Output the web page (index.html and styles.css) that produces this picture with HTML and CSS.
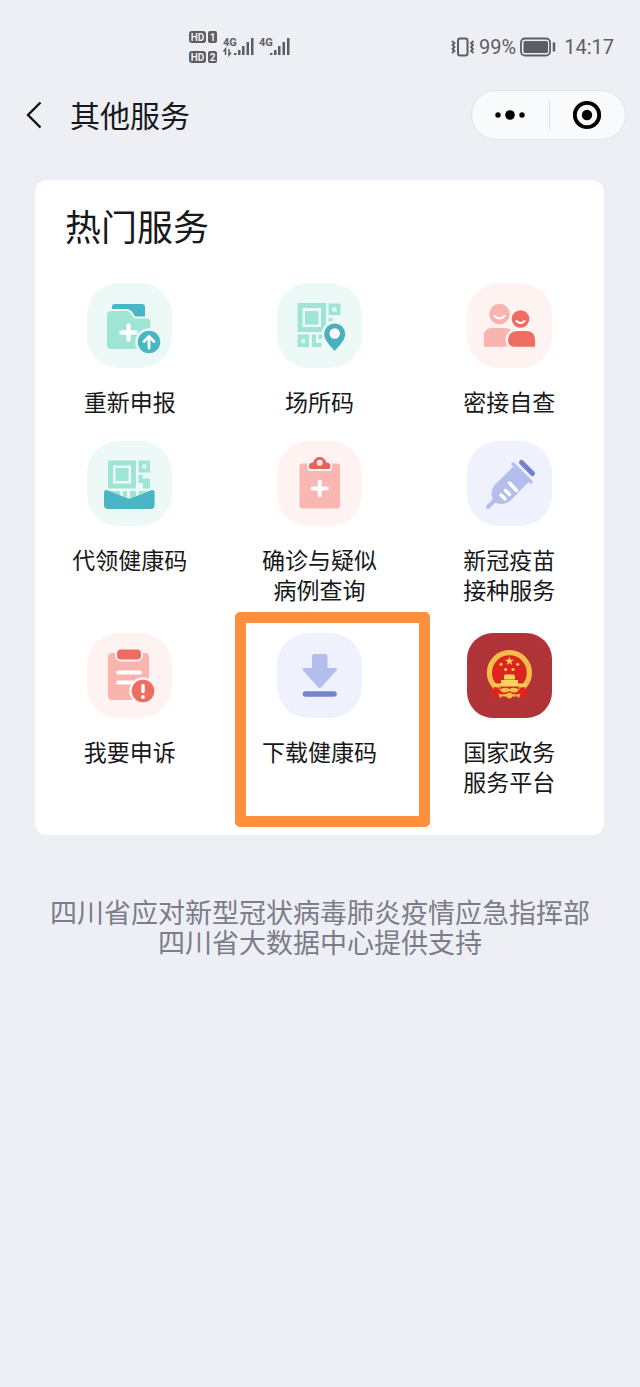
FILE: index.html
```html
<!DOCTYPE html>
<html lang="zh-CN">
  <head>
    <meta charset="UTF-8" />
    <meta name="viewport" content="width=device-width, initial-scale=1.0" />
    <title>其他服务</title>
    <link rel="stylesheet" href="styles.css">
  </head>
  <body>
    <div class="status-bar">
      <svg class="signal" width="104" height="38" viewBox="0 0 104 38">
        <rect x="1" y="3" width="17" height="12" rx="3" />
        <rect x="20" y="3" width="9" height="12" rx="2" />
        <rect x="1" y="23" width="17" height="12" rx="3" />
        <rect x="20" y="23" width="9" height="12" rx="2" />
        <g class="badge-text">
          <text x="9.500" y="12.500">HD</text>
          <text x="24.500" y="12.500">1</text>
          <text x="9.500" y="32.500">HD</text>
          <text x="24.500" y="32.500">2</text>
        </g>
        <text class="net" x="35" y="18">4G</text>
        <text class="net" x="71" y="18">4G</text>
        <path d="M37.500 27v-6l-2 2.500M41 21v6l2-2.500" fill="none" stroke="#5c5e63" stroke-width="1.500" />
        <path d="M46 25h2.500v2H46zM50 22h2.500v5H50zM54 18h2.500v9H54zM58.500 14H61v13h-2.500zM63 10h2.500v17H63z" />
        <path d="M82 25h2.500v2H82zM86 22h2.500v5H86zM90 18h2.500v9H90zM94.500 14H97v13h-2.500zM99 10h2.500v17H99z" />
      </svg>
      <div class="status-right">
        <svg width="24" height="20" viewBox="0 0 24 20" fill="none" stroke="#5c5e63">
          <rect x="7" y="1.500" width="9.500" height="17" rx="2" stroke-width="2" />
          <path d="M1 4l2.500 2-2 2 2 2-2 2 2 2-2.500 2M22.500 4L20 6l2 2-2 2 2 2-2 2 2.500 2" stroke-width="1.800" />
        </svg>
        <span class="percent">99%</span>
        <svg width="36" height="20" viewBox="0 0 36 20">
          <rect x="1" y="1.500" width="29" height="17" rx="4" fill="none" stroke="#5c5e63" stroke-width="1.800" />
          <rect x="3.500" y="4" width="24.500" height="12" rx="1.500" fill="#5c5e63" />
          <path d="M34 5.500v9" stroke="#5c5e63" stroke-width="2.500" />
        </svg>
        <span class="time">14:17</span>
      </div>
    </div>

    <header class="nav">
      <button class="back-btn" aria-label="返回">
        <svg width="16" height="28" viewBox="0 0 16 28" fill="none" stroke="#111" stroke-width="2.400">
          <path d="M14.500 1.500L2 14l12.500 12.500" />
        </svg>
      </button>
      <h1>其他服务</h1>
      <div class="capsule">
        <button aria-label="更多">
          <svg width="32" height="12" viewBox="0 0 32 12">
            <circle cx="4" cy="6" r="2.700" />
            <circle cx="16" cy="6" r="4.800" />
            <circle cx="28" cy="6" r="2.700" />
          </svg>
        </button>
        <button aria-label="关闭">
          <svg width="30" height="30" viewBox="0 0 30 30">
            <circle cx="15" cy="15" r="12.200" fill="none" stroke="#000" stroke-width="3.800" />
            <circle cx="15" cy="15" r="5.200" />
          </svg>
        </button>
      </div>
    </header>

    <main>
      <section class="card">
        <h2>热门服务</h2>
        <div class="services">
          <a class="service" href="#">
            <svg class="tile green" viewBox="0 0 85 85">
              <path d="M25 35V24q0-3 3-3h27q3 0 3 3v11z" fill="#4ab5c4" />
              <path d="M20 32q0-4 4-4h16q2 0 3.500 2l2.500 4q1 1.500 3 1.500h10.500q4 0 4 4V62q0 4-4 4H24q-4 0-4-4z" fill="#9ee5d6" stroke="#edf9f7" stroke-width="4" paint-order="stroke" />
              <path d="M41.500 42.500v14M34.500 49.500h14" stroke="#fff" stroke-width="4.500" stroke-linecap="round" />
              <circle cx="62" cy="59" r="12.500" fill="#4ab5c4" stroke="#edf9f7" stroke-width="2.500" />
              <path d="M62 65V54M57 58.500l5-5 5 5" fill="none" stroke="#fff" stroke-width="2.800" stroke-linecap="round" stroke-linejoin="round" />
            </svg>
            <span class="label">重新申报</span>
          </a>
          <a class="service" href="#">
            <svg class="tile green" viewBox="0 0 85 85">
              <g fill="#9ee5d6" fill-rule="evenodd">
                <path d="M20.500 20H49v29H20.500zM25.500 25v19H44V25zM28 28h13.500v13.500H28z" />
                <path d="M51.500 20.500h12V32h-12zM55.500 24.500v4h4v-4z" />
                <path d="M51.500 35h4v3h-4z" />
                <path d="M20.500 51.500H32V64H20.500zM24.500 56v4H28v-4z" />
                <path d="M35 51.500h4V60h5.500v4H35zM41.500 51.500h3.500V56h-3.500z" />
              </g>
              <path d="M57.700 68c-4-5-10.500-10.500-10.500-17a10.500 10.500 0 0 1 21 0c0 6.500-6.500 12-10.500 17z" fill="#4ab0c0" stroke="#edf9f7" stroke-width="5" stroke-linejoin="round" paint-order="stroke" />
              <circle cx="57.700" cy="50.500" r="5.200" fill="#fff" />
            </svg>
            <span class="label">场所码</span>
          </a>
          <a class="service" href="#">
            <svg class="tile pink" viewBox="0 0 85 85">
              <circle cx="32.500" cy="31" r="10.300" fill="#f9b4b0" />
              <path d="M27.500 33q5 5 10 0" fill="none" stroke="#fff" stroke-width="2" stroke-linecap="round" />
              <path d="M17 63.700V53q0-8 8-8h12q4 0 7 2v16.700z" fill="#f9b4b0" />
              <circle cx="53.500" cy="36" r="8.800" fill="#ee6c62" stroke="#fff3f2" stroke-width="3" paint-order="stroke" />
              <path d="M49.500 38q4 4 8 0" fill="none" stroke="#fff" stroke-width="2" stroke-linecap="round" />
              <path d="M46 63.700q-5-1.500-5-6 0-9.700 11-9.700h7q9 0 9 9v6.700z" fill="#ee6c62" stroke="#fff3f2" stroke-width="5" paint-order="stroke" />
            </svg>
            <span class="label">密接自查</span>
          </a>
          <a class="service" href="#">
            <svg class="tile green" viewBox="0 0 85 85">
              <g fill="#9ee5d6" fill-rule="evenodd">
                <path d="M21 19.500h28v28H21zM26 24.500v18h18v-18zM28.500 27h13v13h-13z" />
                <path d="M51.500 19.500H63v12H51.500zM55.500 23.500v4h3.800v-4z" />
                <path d="M51.500 34h4v3.500H63v10h-7V42h-4.500z" />
                <path d="M24 50h9v5l-9-4zM36 50h4v7l-4-2zM43 50h6v5l-6 3zM51.500 50H61l-9.500 4z" />
              </g>
              <path d="M17 52q0-4 4-2.500l19 7.500q2.300 1 4.600 0l19-7.500q4-1.500 4 2.500v12q0 4-4 4H21q-4 0-4-4z" fill="#4ab5c4" />
            </svg>
            <span class="label">代领健康码</span>
          </a>
          <a class="service" href="#">
            <svg class="tile pink" viewBox="0 0 85 85">
              <rect x="22.500" y="22.500" width="40.500" height="45" rx="3" fill="#f9b6b2" />
              <path d="M34 28q-2 0-2-2v-1q0-3.500 4-3.500 2-5.500 6.700-5.500t6.700 5.500q4 0 4 3.500v1q0 2-2 2z" fill="#e9605f" stroke="#fff3f2" stroke-width="4" paint-order="stroke" />
              <circle cx="42.700" cy="21.700" r="3" fill="#fff2e0" />
              <path d="M42.700 40.500v14M35.700 47.500h14" stroke="#fff" stroke-width="4" stroke-linecap="round" />
            </svg>
            <span class="label two-line">确诊与疑似<br>病例查询</span>
          </a>
          <a class="service" href="#">
            <svg class="tile blue" viewBox="0 0 85 85">
              <path d="M54.500 21.500l11 11" stroke="#7182c6" stroke-width="5" stroke-linecap="round" />
              <g fill="#b3beec" stroke="#b3beec">
                <path d="M46 23l18 18" stroke-width="3.500" stroke-linecap="round" />
                <path d="M47.500 24.500L63 39.500 44 59q-4 4-9 4l-7-1-2-2-1.500-7q0-5 3-9z" stroke="none" />
                <path d="M27 60l-6 6" stroke-width="4" stroke-linecap="round" />
              </g>
              <path d="M42.500 42l7 7.500M38.500 49.500l4 4M34 54l4 4" stroke="#fff" stroke-width="3.500" stroke-linecap="round" />
            </svg>
            <span class="label two-line">新冠疫苗<br>接种服务</span>
          </a>
          <a class="service" href="#">
            <svg class="tile pink" viewBox="0 0 85 85">
              <rect x="21" y="20" width="41" height="47" rx="4" fill="#f9b4b0" />
              <rect x="30" y="16.500" width="24" height="10" rx="4" fill="#ee6c62" stroke="#fff3f2" stroke-width="4" paint-order="stroke" />
              <path d="M31 39.500h22M31 49.500h15" stroke="#fff" stroke-width="4" stroke-linecap="round" />
              <circle cx="56" cy="58" r="12.500" fill="#ee6c62" stroke="#fff3f2" stroke-width="2.500" />
              <path d="M56 52.500v6" stroke="#fff" stroke-width="3.500" stroke-linecap="round" />
              <circle cx="56" cy="64" r="1.900" fill="#fff" />
            </svg>
            <span class="label">我要申诉</span>
          </a>
          <a class="service highlight" href="#">
            <svg class="tile blue" viewBox="0 0 85 85">
              <path d="M35 23q0-2 2-2h11.500q2 0 2 2v12h7q4 0 1.500 3L44.500 54q-1.700 2-3.500 0L26.500 38q-2.500-3 1-3H35z" fill="#b3beec" />
              <path d="M28.500 61h28.500" stroke="#7585cb" stroke-width="5.600" stroke-linecap="round" />
            </svg>
            <span class="label">下载健康码</span>
          </a>
          <a class="service" href="#">
            <svg class="tile red" viewBox="0 0 85 85">
              <path d="M25 51h35v14l-7-1-5-2H37l-5 2-7 1z" fill="#dd231f" />
              <circle cx="42.400" cy="39.700" r="20" fill="#dd231f" stroke="#f6bd4a" stroke-width="5.200" />
              <g fill="#fbd45b">
                <path d="M42.400 23.500l1.100 3.200h3.400l-2.700 2 1 3.300-2.800-2-2.800 2 1-3.300-2.700-2h3.400z" />
                <circle cx="34" cy="31.300" r="1.500" />
                <circle cx="50.700" cy="31.300" r="1.500" />
                <circle cx="38.700" cy="36.500" r="1.500" />
                <circle cx="46" cy="36.500" r="1.500" />
                <path d="M37 43l1-1.500h9L48 43v3.500H37zM34 47h17v3.500H34zM26 50.500h33l-1.500 3H27.500z" />
              </g>
              <path d="M27 54l7 1 8.400-1 8.400 1 7-1v7H27z" fill="#dd231f" />
              <g fill="#f6bd4a">
                <path d="M34 56q4-2.500 8.400 0 4.400-2.500 8.400 0l3-1-4 4q-3.500 1.500-7.400-1-4 2.500-7.400 1l-4-4z" />
                <circle cx="42.400" cy="62.500" r="3" />
                <path d="M31.500 60.500l5.500 1.500-4 3zM53.500 60.500L48 62l4 3zM36 62h13v1.500H36z" />
              </g>
            </svg>
            <span class="label two-line">国家政务<br>服务平台</span>
          </a>
        </div>
      </section>
    </main>

    <footer>
      <p>四川省应对新型冠状病毒肺炎疫情应急指挥部</p>
      <p>四川省大数据中心提供支持</p>
    </footer>
  </body>
</html>
```

FILE: styles.css
```css
* {
  margin: 0;
  padding: 0;
  box-sizing: border-box;
}

body {
  min-height: 100vh;
  background: #eeeff5;
  color: #17181a;
  font-family: "Noto Sans CJK SC", sans-serif;
}

button {
  background: transparent;
  border: none;
  cursor: pointer;
}

svg {
  display: block;
}

.status-bar {
  display: flex;
  justify-content: space-between;
  align-items: center;
  height: 90px;
  padding: 4px 26px 0 188px;
  color: #5c5e63;
  font-family: Roboto, sans-serif;
  font-size: 20px;
}

.signal {
  fill: #5c5e63;
}

.badge-text {
  fill: #eeeff5;
  font-size: 10px;
  font-weight: bold;
  text-anchor: middle;
}

.net {
  font-size: 11px;
  font-weight: bold;
}

.status-right {
  display: flex;
  align-items: center;
  gap: 4px;
}

.time {
  margin-left: 4px;
}

.nav {
  display: flex;
  align-items: center;
  height: 50px;
  padding: 0 14px 0 26px;
}

.nav h1 {
  margin-left: 28px;
  padding-bottom: 2px;
  font-size: 30px;
  font-weight: 400;
  line-height: 40px;
}

.capsule {
  display: flex;
  width: 155px;
  height: 50px;
  margin-left: auto;
  background: #f9fafb;
  border: 1px solid #e2e3e8;
  border-radius: 25px;
}

.capsule button {
  display: flex;
  flex: 1;
  justify-content: center;
  align-items: center;
}

.capsule button + button {
  background: linear-gradient(#e2e3e8, #e2e3e8) left center / 1px 30px no-repeat;
}

.card {
  margin: 40px 36px 0 35px;
  padding: 21px 0 35px;
  background: #fff;
  border-radius: 12px;
}

.card h2 {
  margin: 0 30px 34px;
  font-size: 36px;
  font-weight: 400;
  line-height: 48px;
}

.services {
  display: grid;
  grid-template-columns: repeat(3, 1fr);
  row-gap: 25px;
}

.service {
  position: relative;
  display: flex;
  flex-direction: column;
  align-items: center;
  gap: 18px;
  color: inherit;
  text-decoration: none;
}

.tile {
  width: 85px;
  height: 85px;
  border-radius: 32px;
}

.green {
  background: #edf9f7;
}

.pink {
  background: #fff3f2;
}

.blue {
  background: #eff1fd;
}

.red {
  background: #b03437;
  border-radius: 26px;
}

.label {
  font-size: 23px;
  line-height: 30px;
  text-align: center;
}

.two-line {
  padding-bottom: 4px;
}

/* orange frame around the download entry */
.highlight::after {
  content: "";
  position: absolute;
  top: -21px;
  right: -16px;
  left: 10px;
  height: 215px;
  border: 11px solid #ff8f3c;
  border-radius: 5px;
  box-sizing: border-box;
}

footer {
  padding: 62px 20px;
  color: #7b7d89;
  font-size: 27px;
  line-height: 30px;
  text-align: center;
}
```
